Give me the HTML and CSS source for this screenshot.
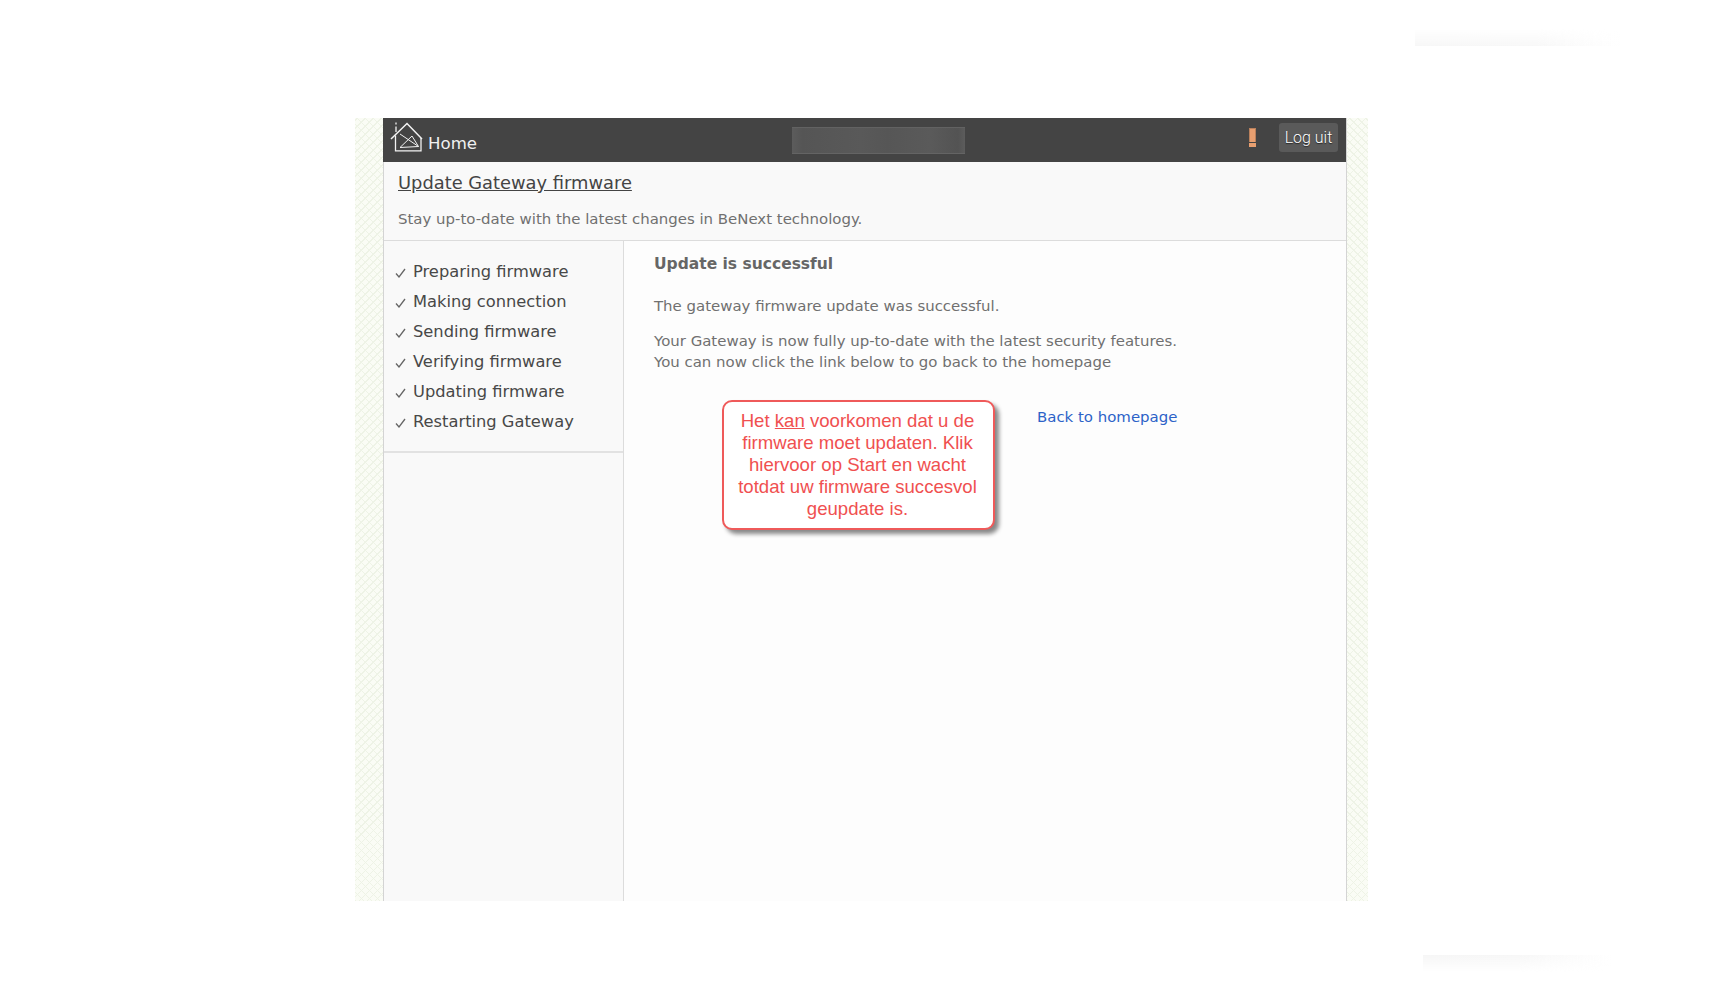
FILE: index.html
```html
<!DOCTYPE html>
<html lang="en">
<head>
<meta charset="utf-8">
<title>Update Gateway firmware</title>
<link rel="stylesheet" href="styles.css">
</head>
<body>
<div class="smudge smudge-top"></div>
<div class="frame">
  <div class="panel">
    <header class="topbar">
      <a class="home">
        <svg class="home-icon" width="33" height="30" viewBox="0 0 33 30" fill="none" stroke="#f2f2f2" stroke-width="1.3">
          <path d="M1 17 L17 1.5 L32 17" stroke-width="1.5"/>
          <path d="M5.5 13.5 V28.8 H31 V16"/>
          <path d="M6 0.5 V2.5 M6 4.5 V10"/>
          <path d="M10 12 L28.5 24.5 L10 25.5 L22 14 L28.5 24.5" stroke-width="1"/>
        </svg>
        <span class="home-label">Home</span>
      </a>
      <div class="blurred"></div>
      <div class="actions">
        <div class="alert"><span class="alert-bar"></span><span class="alert-dot"></span></div>
        <button class="logout">Log uit</button>
      </div>
    </header>
    <section class="intro">
      <h1 class="page-title">Update Gateway firmware</h1>
      <p class="page-sub">Stay up-to-date with the latest changes in BeNext technology.</p>
    </section>
    <div class="columns">
      <aside class="sidebar">
        <ul class="steps">
          <li class="step"><svg class="check" width="11" height="10" viewBox="0 0 11 10"><path d="M1 5.5 L4 9 L10 1" fill="none" stroke="#666" stroke-width="1.3"/></svg>Preparing firmware</li>
          <li class="step"><svg class="check" width="11" height="10" viewBox="0 0 11 10"><path d="M1 5.5 L4 9 L10 1" fill="none" stroke="#666" stroke-width="1.3"/></svg>Making connection</li>
          <li class="step"><svg class="check" width="11" height="10" viewBox="0 0 11 10"><path d="M1 5.5 L4 9 L10 1" fill="none" stroke="#666" stroke-width="1.3"/></svg>Sending firmware</li>
          <li class="step"><svg class="check" width="11" height="10" viewBox="0 0 11 10"><path d="M1 5.5 L4 9 L10 1" fill="none" stroke="#666" stroke-width="1.3"/></svg>Verifying firmware</li>
          <li class="step"><svg class="check" width="11" height="10" viewBox="0 0 11 10"><path d="M1 5.5 L4 9 L10 1" fill="none" stroke="#666" stroke-width="1.3"/></svg>Updating firmware</li>
          <li class="step"><svg class="check" width="11" height="10" viewBox="0 0 11 10"><path d="M1 5.5 L4 9 L10 1" fill="none" stroke="#666" stroke-width="1.3"/></svg>Restarting Gateway</li>
        </ul>
      </aside>
      <main class="content">
        <h2 class="result-title">Update is successful</h2>
        <p class="para">The gateway firmware update was successful.</p>
        <p class="para">Your Gateway is now fully up-to-date with the latest security features.<br>You can now click the link below to go back to the homepage</p>
        <a class="back-link">Back to homepage</a>
        <div class="callout">Het <u>kan</u> voorkomen dat u de firmware moet updaten. Klik hiervoor op Start en wacht totdat uw firmware succesvol geupdate is.</div>
      </main>
    </div>
  </div>
</div>
<div class="smudge smudge-bottom"></div>
</body>
</html>
```
FILE: styles.css
```css
* { box-sizing: border-box; }
html, body { margin: 0; padding: 0; background: #fff; }
body {
  height: 1004px;
  overflow: hidden;
  padding: 118px 0 0 355px;
  font-family: "DejaVu Sans", sans-serif;
  color: #555;
}
.frame {
  width: 1013px;
  height: 783px;
  padding: 0 21px 0 28px;
  background-color: #fafcf5;
  background-image:
    repeating-linear-gradient(45deg, #eef3e6 0 1px, transparent 1px 5.66px),
    repeating-linear-gradient(-45deg, #eef3e6 0 1px, transparent 1px 5.66px);
}
.panel {
  height: 100%;
  display: flex;
  flex-direction: column;
  background: #f9f9f9;
  border-right: 1px solid #d4d4d4;
  border-left: 1px solid #d4d4d4;
}
.topbar {
  height: 44px;
  flex: none;
  background: #444;
  margin: 0 0 0 -1px;
  display: flex;
  align-items: flex-start;
  position: relative;
}
.home { display: flex; align-items: flex-start; padding: 4px 0 0 7px; width: 409px; }
.home-icon { display: block; flex: none; }
.home-label { color: #f0f0f0; font-size: 16.6px; line-height: 19px; margin: 12px 0 0 5px; }
.blurred {
  width: 173px;
  height: 27px;
  margin-top: 9px;
  background:
    linear-gradient(90deg, #5c5c5c, #555 6%, #595959 40%, #565656 55%, #5a5a5a 80%, #535353 96%, #5c5c5c),
    #585858;
  box-shadow: inset 0 1px 0 #626262, inset 0 -1px 0 #646464;
}
.actions { margin-left: auto; display: flex; align-items: flex-start; padding: 5px 8px 0 0; }
.alert { display: flex; flex-direction: column; gap: 1px; width: 7px; margin: 5px 23px 0 0; }
.alert-bar { height: 14px; background: #e89f70; border: 1px solid #b9805c; border-bottom: 0; }
.alert-dot { height: 4px; background: #e89f70; }
.logout {
  width: 59px;
  height: 29px;
  padding: 0;
  border: 0;
  border-radius: 3px;
  background: #5a5a5a;
  color: #fff;
  font-family: Roboto, sans-serif;
  font-weight: 300;
  font-size: 16px;
  text-shadow: 0 1px 1px #222;
}
.intro { height: 79px; flex: none; padding: 0 14px; border-bottom: 1px solid #dcdcdc; }
.page-title {
  margin: 0;
  padding-top: 10px;
  font-size: 17.85px;
  line-height: 22px;
  font-weight: 400;
  color: #444;
  text-decoration: underline;
}
.page-sub { margin: 16px 0 0; font-size: 14.95px; line-height: 18px; color: #707070; }
.columns { flex: 1; display: flex; min-height: 0; }
.sidebar {
  width: 240px;
  flex: none;
  border-right: 1px solid #dcdcdc;
}
.steps {
  list-style: none;
  margin: 0;
  padding: 16px 0 15px 11px;
  border-bottom: 2px solid #e2e2e2;
  height: 212px;
}
.step {
  height: 30px;
  line-height: 30px;
  font-size: 16.3px;
  color: #484848;
  display: flex;
  align-items: center;
}
.check { flex: none; margin: 2px 7px 0 0; }
.content { flex: 1; background: #fdfdfd; padding: 0 0 0 30px; position: relative; }
.result-title { margin: 11px 0 0; font-size: 15.5px; line-height: 24px; font-weight: 700; color: #666; }
.para { margin: 0; font-size: 14.95px; line-height: 21px; color: #707070; }
.result-title + .para { margin-top: 20px; }
.para + .para { margin-top: 14px; }
.back-link {
  display: block;
  margin: 34px 0 0 383px;
  font-size: 14.95px;
  line-height: 21px;
  color: #2c62c8;
}
.callout {
  position: absolute;
  left: 98px;
  top: 159px;
  width: 273px;
  height: 130px;
  padding: 8px 10px 8px 8px;
  background: #fff;
  border: 2px solid #ef5a5a;
  border-radius: 10px;
  box-shadow: 4px 4px 4px #888;
  color: #f05050;
  font-family: "Liberation Sans", Arial, sans-serif;
  font-size: 18.6px;
  line-height: 22px;
  text-align: center;
}
.smudge { position: absolute; height: 17px; }
.smudge-top {
  left: 1415px;
  top: 29px;
  width: 205px;
  background: linear-gradient(90deg, #f7f7f7, #f8f8f8 60%, transparent);
  -webkit-mask-image: linear-gradient(transparent, #000);
  mask-image: linear-gradient(transparent, #000);
}
.smudge-bottom {
  left: 1423px;
  top: 955px;
  width: 190px;
  background: linear-gradient(90deg, #f6f6f6, #f7f7f7 50%, transparent);
  -webkit-mask-image: linear-gradient(#000, transparent);
  mask-image: linear-gradient(#000, transparent);
}
```
